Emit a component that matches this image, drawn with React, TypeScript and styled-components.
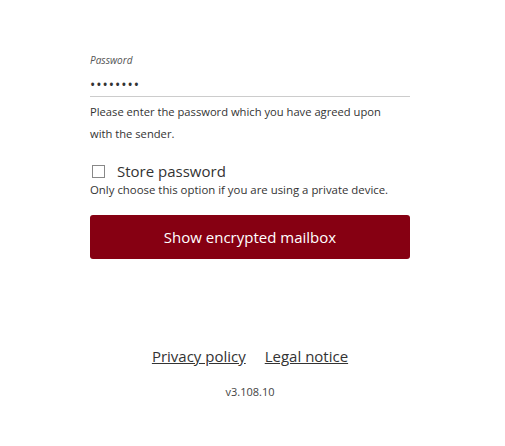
import React from "react";
import styled, { createGlobalStyle } from "styled-components";

const Global = createGlobalStyle`
  html, body { margin: 0; padding: 0; background: #fff; }
  body { font-family: "Open Sans", "Noto Sans", sans-serif; color: #333; }
`;

const Page = styled.div`
  width: 500px;
  height: 446px;
  display: flex;
  flex-direction: column;
  align-items: center;
`;

const Form = styled.form`
  width: 320px;
  margin-top: 53px;
  display: flex;
  flex-direction: column;
`;

const Label = styled.label`
  font-size: 10px;
  font-style: italic;
  color: #555;
  line-height: 14px;
`;

const Input = styled.input`
  border: none;
  border-bottom: 1px solid #ccc;
  outline: none;
  padding: 0;
  margin-top: 6px;
  height: 23px;
  font-size: 14px;
  letter-spacing: 1px;
  color: #333;
  font-family: inherit;
`;

const Help = styled.p`
  margin: 4px 0 0;
  font-size: 11.2px;
  line-height: 22px;
  color: #333;
`;

const CheckRow = styled.label`
  display: flex;
  align-items: center;
  margin-top: 16px;
  font-size: 15px;
  line-height: 20px;
  color: #333;
`;

const Box = styled.span`
  width: 11px;
  height: 11px;
  border: 1px solid #888;
  margin: 0 12px 0 2px;
`;

const Note = styled.div`
  margin-top: 1px;
  font-size: 11.4px;
  line-height: 16px;
  color: #333;
`;

const Button = styled.button`
  margin-top: 17px;
  height: 44px;
  border: none;
  border-radius: 3px;
  background: #860012;
  color: #fff;
  font-family: inherit;
  font-size: 15px;
`;

const Links = styled.div`
  margin-top: 87px;
  display: flex;
  gap: 19px;
  font-size: 15px;
`;

const Link = styled.a`
  color: #333;
  text-decoration: underline;
`;

const Version = styled.div`
  margin-top: 18px;
  font-size: 11px;
  color: #444;
`;

export default function App() {
  return (
    <Page>
      <Global />
      <Form onSubmit={(e) => e.preventDefault()}>
        <Label>Password</Label>
        <Input type="password" defaultValue="password" />
        <Help>
          Please enter the password which you have agreed upon
          <br />
          with the sender.
        </Help>
        <CheckRow>
          <Box />
          Store password
        </CheckRow>
        <Note>Only choose this option if you are using a private device.</Note>
        <Button type="submit">Show encrypted mailbox</Button>
      </Form>
      <Links>
        <Link href="#">Privacy policy</Link>
        <Link href="#">Legal notice</Link>
      </Links>
      <Version>v3.108.10</Version>
    </Page>
  );
}
